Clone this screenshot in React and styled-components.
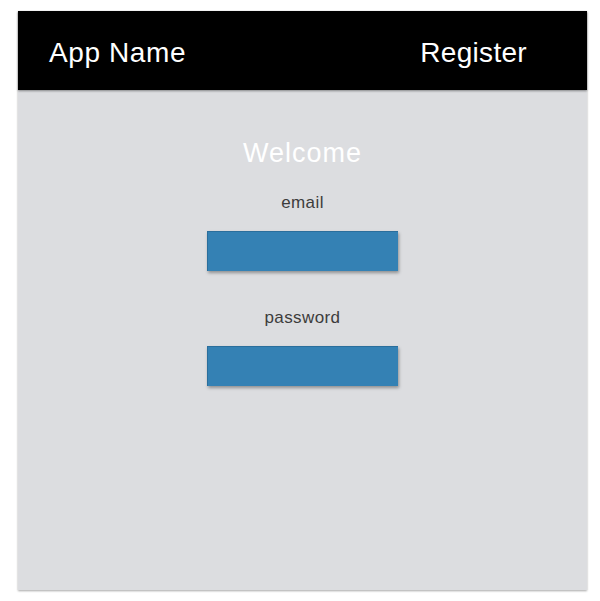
import styled, { createGlobalStyle } from "styled-components";

const GlobalStyle = createGlobalStyle`
    html, body {
        margin: 0;
        padding: 0;
        background: #ffffff;
    }
    body {
        font-family: "Liberation Sans", Arial, sans-serif;
    }
`;

export default function App() {
    return (
        <>
            <GlobalStyle />
            <Page>
                <Panel>
                    <Header>
                        <Brand>App Name</Brand>
                        <NavLink>Register</NavLink>
                    </Header>
                    <Body>
                        <Title>Welcome</Title>
                        <Field>
                            <Label>email</Label>
                            <Input type="email" />
                        </Field>
                        <Field>
                            <Label>password</Label>
                            <Input type="password" />
                        </Field>
                    </Body>
                </Panel>
            </Page>
        </>
    );
}

const Page = styled.div`
    padding: 11px 0 0 18px;
    width: 600px;
    height: 601px;
    box-sizing: border-box;
`;

const Panel = styled.div`
    display: flex;
    flex-direction: column;
    width: 569px;
    height: 579px;
    background-color: #dcdde0;
    box-shadow: 0 1px 2px rgba(0, 0, 0, 0.35);
`;

const Header = styled.header`
    display: flex;
    justify-content: space-between;
    align-items: flex-start;
    box-sizing: border-box;
    height: 79px;
    padding: 28px 60px 0 31px;
    background-color: #000000;
    box-shadow: 0 1px 2px rgba(0, 0, 0, 0.4);
`;

const Brand = styled.span`
    color: #ffffff;
    font-size: 28px;
    line-height: 28px;
    letter-spacing: 0.6px;
`;

const NavLink = styled.span`
    color: #ffffff;
    font-size: 28px;
    line-height: 28px;
    letter-spacing: 0.3px;
`;

const Body = styled.main`
    display: flex;
    flex-direction: column;
    align-items: center;
    padding-top: 50px;
`;

const Title = styled.h1`
    margin: 0 0 27px 0;
    color: #ffffff;
    font-size: 27px;
    line-height: 27px;
    font-weight: normal;
    letter-spacing: 1px;
`;

const Field = styled.div`
    display: flex;
    flex-direction: column;
    align-items: center;
    margin-bottom: 38px;
`;

const Label = styled.label`
    margin-bottom: 20px;
    color: #3c3c3c;
    font-size: 17px;
    line-height: 17px;
    letter-spacing: 0.4px;
`;

const Input = styled.input`
    box-sizing: border-box;
    width: 191px;
    height: 40px;
    margin: 0;
    padding: 0 8px;
    border: none;
    border-top: 1px solid #2a6e9c;
    border-left: 1px solid #2a6e9c;
    background-color: #3481b4;
    box-shadow: 1px 2px 3px rgba(0, 0, 0, 0.35);
    outline: none;
`;
